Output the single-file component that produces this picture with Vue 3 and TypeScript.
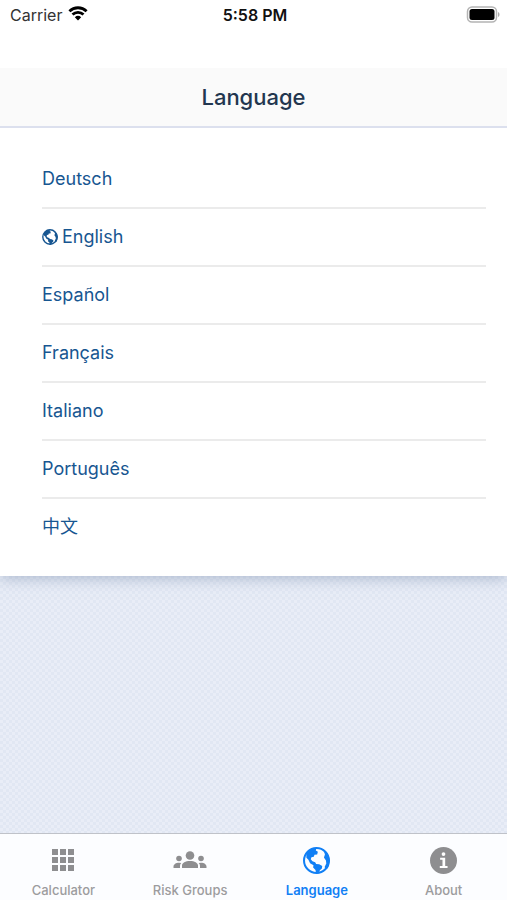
<script setup lang="ts">
import { ref } from 'vue'

interface Language {
  code: string
  name: string
}

const languages: Language[] = [
  { code: 'de', name: 'Deutsch' },
  { code: 'en', name: 'English' },
  { code: 'es', name: 'Español' },
  { code: 'fr', name: 'Français' },
  { code: 'it', name: 'Italiano' },
  { code: 'pt', name: 'Português' },
  { code: 'zh', name: '中文' },
]

const tabs = ['Calculator', 'Risk Groups', 'Language', 'About']
const selected = ref('en')
const activeTab = ref('Language')

const continents =
  'M10 20 24 6l16-4-2 8 6 4-2 8-8 1-2 6-7 1-2 6 5 6 8 3 3 5 9 1 9 5-1 8-6 5-3 9-8 2-2-12-7-7 1-7-10-6-5-10-6-6z' +
  'M60 7l14 15 5 18-5 22-7 4-3-7 5-10-1-9-6-9 3-9z'
</script>

<template>
  <div class="screen">
    <div class="status">
      <div class="carrier">
        <span>Carrier</span>
        <svg class="wifi" viewBox="0 0 20 15" aria-hidden="true">
          <path d="M1.4 5.2a12.4 12.4 0 0 1 17.2 0M4.5 8.6a7.9 7.9 0 0 1 11 0" fill="none" stroke="currentColor" stroke-width="2.8" />
          <path d="M6.8 11.300a4.800 4.800 0 0 1 6.400 0L10 14.6z" fill="currentColor" />
        </svg>
      </div>
      <span class="time">5:58 PM</span>
      <svg class="battery" viewBox="0 0 34 18" aria-hidden="true">
        <rect x="1.500" y="1" width="29" height="15" rx="4.5" fill="none" stroke="#b4b4b4" stroke-width="1.5" />
        <rect x="3.500" y="3" width="25" height="11" rx="2.5" fill="#000" />
        <path d="M32 6v5c2-.7 2-4.300 0-5z" fill="#aaa" />
      </svg>
    </div>

    <header class="header"><h1>Language</h1></header>

    <main class="content">
      <ul class="list">
        <li v-for="language in languages" :key="language.code">
          <button type="button" class="language" :lang="language.code" @click="selected = language.code">
            <svg v-if="selected === language.code" class="mark" viewBox="0 0 80 80" aria-hidden="true">
              <circle cx="40" cy="40" r="36" fill="none" stroke="currentColor" stroke-width="7" />
              <path :d="continents" fill="currentColor" />
            </svg>
            <span>{{ language.name }}</span>
          </button>
        </li>
      </ul>
    </main>

    <nav class="tabs">
      <button
        v-for="tab in tabs"
        :key="tab"
        type="button"
        class="tab"
        :class="{ active: activeTab === tab }"
        @click="activeTab = tab"
      >
        <span class="icon">
          <svg v-if="tab === 'Calculator'" class="grid" viewBox="0 0 22 22" aria-hidden="true">
            <path d="M0 0h6v6H0zM8 0h6v6H8zM16 0h6v6h-6zM0 8h6v6H0zM8 8h6v6H8zM16 8h6v6h-6zM0 16h6v6H0zM8 16h6v6H8zM16 16h6v6h-6z" fill="currentColor" />
          </svg>
          <svg v-else-if="tab === 'Risk Groups'" class="groups" viewBox="0 0 34 18" aria-hidden="true">
            <g fill="currentColor">
              <circle cx="17" cy="4.500" r="4.300" />
              <circle cx="6" cy="7.500" r="2.800" />
              <circle cx="28" cy="7.500" r="2.800" />
              <path d="M9 17v-2.500c0-2.500 3.500-4.500 8-4.500s8 2 8 4.500V17zM.5 17v-1.500c0-2.200 2.500-3.800 5.500-3.800l2.300.3q-1.300 1.200-1.300 3v2zM33.500 17v-1.500c0-2.200-2.500-3.800-5.500-3.800l-2.300.3q1.300 1.200 1.300 3v2z" />
            </g>
          </svg>
          <svg v-else-if="tab === 'Language'" class="round" viewBox="0 0 80 80" aria-hidden="true">
            <circle cx="40" cy="40" r="37" fill="none" stroke="currentColor" stroke-width="6" />
            <path :d="continents" fill="currentColor" />
          </svg>
          <svg v-else class="round" viewBox="0 0 80 80" aria-hidden="true">
            <circle cx="40" cy="40" r="40" fill="currentColor" />
            <circle cx="40" cy="21" r="5.500" fill="#fff" />
            <path d="M30 32h15v24h7v6H29v-6h8V38h-7z" fill="#fff" />
          </svg>
        </span>
        <span class="label">{{ tab }}</span>
      </button>
    </nav>
  </div>
</template>

<style>
body {
  margin: 0;
}
</style>

<style scoped>
.screen {
  display: flex;
  flex-direction: column;
  min-height: 100vh;
  font-family: Inter, "Noto Sans CJK SC", sans-serif;
  background-color: #e9edf7;
  background-image: conic-gradient(#e1e7f3 25%, transparent 0 50%, #e1e7f3 0 75%, transparent 0);
  background-size: 6px 6px;
}

.status {
  display: grid;
  grid-template-columns: 1fr auto 1fr;
  align-items: start;
  height: 62px;
  padding: 6px 7px 0 10px;
  background: #fff;
  color: #111;
  font-size: 16px;
  line-height: 18px;
}

.carrier {
  display: flex;
  gap: 6px;
  color: #333;
}

.wifi {
  width: 20px;
  height: 15px;
  color: #000;
}

.time {
  font-weight: 600;
}

.battery {
  justify-self: end;
  width: 34px;
  height: 18px;
}

.header {
  position: relative;
  z-index: 1;
  display: flex;
  align-items: center;
  justify-content: center;
  height: 58px;
  border-bottom: 2px solid #dce0ee;
  background: #fafafa;
}

h1 {
  margin: 0;
  color: #22364f;
  font-size: 22px;
  font-weight: 500;
  line-height: 28px;
}

.content {
  padding: 23px 21px 21px 42px;
  background: #fff;
  box-shadow: 0 2px 14px #8295b399;
}

.list {
  margin: 0;
  padding: 0;
  list-style: none;
}

li + li {
  border-top: 2px solid #ebebeb;
}

.language {
  display: flex;
  align-items: center;
  gap: 4px;
  width: 100%;
  height: 56px;
  padding: 0;
  border: 0;
  background: none;
  color: #175691;
  font: inherit;
  font-size: 18px;
  line-height: 24px;
  text-align: left;
}

.mark {
  width: 16px;
  height: 16px;
}

.tabs {
  display: grid;
  grid-template-columns: repeat(4, 1fr);
  margin-top: auto;
  border-top: 1px solid #bfc2c9;
  background: #fcfdff;
}

.tab {
  display: flex;
  flex-direction: column;
  align-items: center;
  gap: 6px;
  padding: 10px 0 2px;
  border: 0;
  background: none;
  color: #8e8e90;
  font: inherit;
  font-size: 13px;
  font-weight: 500;
  line-height: 16px;
}

.icon {
  display: flex;
  align-items: center;
  justify-content: center;
  height: 32px;
}

.label {
  color: #9c9c9e;
}

.active,
.active .label {
  color: #107ff5;
  font-weight: 600;
}

.grid {
  width: 22px;
  height: 22px;
}

.groups {
  width: 34px;
  height: 18px;
}

.round {
  width: 27px;
  height: 27px;
}
</style>
